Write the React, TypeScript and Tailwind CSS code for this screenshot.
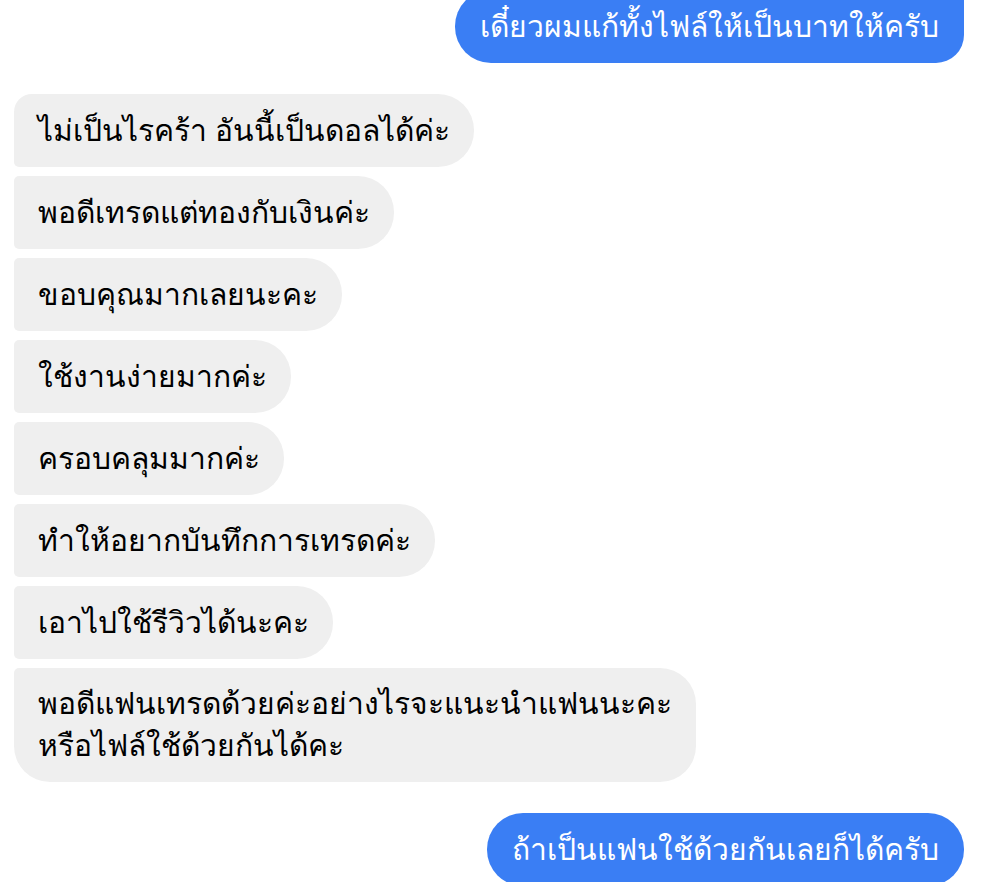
import React from "react";

const incoming: { text: React.ReactNode; cls: string }[] = [
  { text: "ไม่เป็นไรคร้า อันนี้เป็นดอลได้ค่ะ", cls: "rounded-tl-[18px] rounded-bl-[5px]" },
  { text: "พอดีเทรดแต่ทองกับเงินค่ะ", cls: "rounded-tl-[5px] rounded-bl-[5px]" },
  { text: "ขอบคุณมากเลยนะคะ", cls: "rounded-tl-[5px] rounded-bl-[5px]" },
  { text: "ใช้งานง่ายมากค่ะ", cls: "rounded-tl-[5px] rounded-bl-[5px]" },
  { text: "ครอบคลุมมากค่ะ", cls: "rounded-tl-[5px] rounded-bl-[5px]" },
  { text: "ทำให้อยากบันทึกการเทรดค่ะ", cls: "rounded-tl-[5px] rounded-bl-[5px]" },
  { text: "เอาไปใช้รีวิวได้นะคะ", cls: "rounded-tl-[5px] rounded-bl-[5px]" },
  {
    text: (
      <>
        พอดีแฟนเทรดด้วยค่ะอย่างไรจะแนะนำแฟนนะคะ
        <br />
        หรือไฟล์ใช้ด้วยกันได้คะ
      </>
    ),
    cls: "rounded-tl-[5px] rounded-bl-[36px]",
  },
];

export default function App() {
  return (
    <div className="h-[882px] w-[996px] overflow-hidden bg-white font-['Liberation_Sans',sans-serif]">
      <div className="flex flex-col">
        <div className="-mt-[10px] flex justify-end pr-[32px]">
          <div className="flex h-[73px] items-center rounded-l-[36px] rounded-tr-[8px] rounded-br-[28px] bg-[#3a7ef4] px-[25px] text-[30px] leading-[42px] text-white">
            เดี๋ยวผมแก้ทั้งไฟล์ให้เป็นบาทให้ครับ
          </div>
        </div>
        <div className="mt-[31px] flex flex-col items-start gap-[9px] pl-[14px]">
          {incoming.map((m, i) => (
            <div
              key={i}
              className={`flex min-h-[73px] items-center rounded-r-[36px] bg-[#efefef] px-[24px] py-[15px] text-[30px] leading-[42px] text-black ${m.cls}`}
            >
              <span>{m.text}</span>
            </div>
          ))}
        </div>
        <div className="mt-[31px] flex justify-end pr-[32px]">
          <div className="flex h-[73px] items-center rounded-[36px] bg-[#3a7ef4] px-[25px] text-[30px] leading-[42px] text-white">
            ถ้าเป็นแฟนใช้ด้วยกันเลยก็ได้ครับ
          </div>
        </div>
      </div>
    </div>
  );
}
